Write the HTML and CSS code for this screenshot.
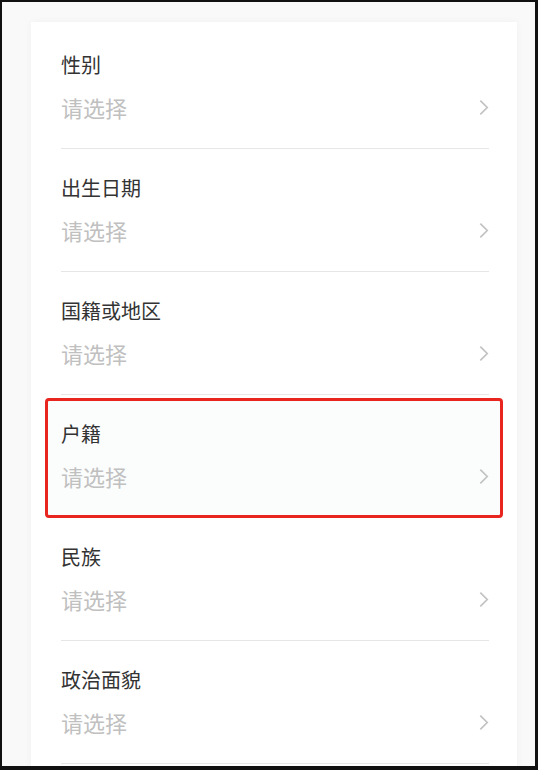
FILE: index.html
```html
<!DOCTYPE html>
<html lang="zh-CN">
<head>
  <meta charset="UTF-8" />
  <meta name="viewport" content="width=device-width, initial-scale=1.0" />
  <title>个人信息</title>
  <link rel="stylesheet" href="styles.css">
</head>
<body>
  <div class="frame">
    <div class="card">
      <div class="row">
        <div class="label">性别</div>
        <div class="value"><span>请选择</span><svg class="arrow" viewBox="0 0 10 16"><polyline points="2,1.5 8.5,8 2,14.5"/></svg></div>
      </div>
      <div class="row">
        <div class="label">出生日期</div>
        <div class="value"><span>请选择</span><svg class="arrow" viewBox="0 0 10 16"><polyline points="2,1.5 8.5,8 2,14.5"/></svg></div>
      </div>
      <div class="row">
        <div class="label">国籍或地区</div>
        <div class="value"><span>请选择</span><svg class="arrow" viewBox="0 0 10 16"><polyline points="2,1.5 8.5,8 2,14.5"/></svg></div>
      </div>
      <div class="row">
        <div class="highlight"></div>
        <div class="label">户籍</div>
        <div class="value"><span>请选择</span><svg class="arrow" viewBox="0 0 10 16"><polyline points="2,1.5 8.5,8 2,14.5"/></svg></div>
      </div>
      <div class="row">
        <div class="label">民族</div>
        <div class="value"><span>请选择</span><svg class="arrow" viewBox="0 0 10 16"><polyline points="2,1.5 8.5,8 2,14.5"/></svg></div>
      </div>
      <div class="row">
        <div class="label">政治面貌</div>
        <div class="value"><span>请选择</span><svg class="arrow" viewBox="0 0 10 16"><polyline points="2,1.5 8.5,8 2,14.5"/></svg></div>
      </div>
    </div>
  </div>
</body>
</html>
```

FILE: styles.css
```css
html, body {
  margin: 0;
  padding: 0;
}
body {
  font-family: "Noto Sans CJK SC", "Noto Sans", sans-serif;
  background: #111;
}
.frame {
  box-sizing: border-box;
  height: 770px;
  border-style: solid;
  border-color: #111;
  border-width: 2px 3px 4px 2px;
  background: #f9f9f9;
  overflow: hidden;
  padding: 20px 18px 0 29px;
}
.card {
  background: #fff;
  padding: 4px 28px 0 30px;
  min-height: 760px;
  box-shadow: 0 0 8px rgba(0,0,0,0.04);
}
.row {
  position: relative;
  padding: 25px 0 26px;
  border-bottom: 1px solid #e6e6e6;
}
.label {
  position: relative;
  font-size: 20px;
  line-height: 28px;
  color: #333;
}
.value {
  position: relative;
  display: flex;
  justify-content: space-between;
  align-items: center;
  margin-top: 13px;
  font-size: 22px;
  line-height: 30px;
  color: #c0c0c0;
}
.arrow {
  width: 11px;
  height: 17px;
  fill: none;
  stroke: #c2c2c2;
  stroke-width: 1.6;
}
.highlight {
  position: absolute;
  left: -16px;
  top: 3px;
  width: 458px;
  height: 120px;
  box-sizing: border-box;
  border: 3px solid #e8251f;
  border-radius: 4px;
  background: #fbfcfc;
}
```
